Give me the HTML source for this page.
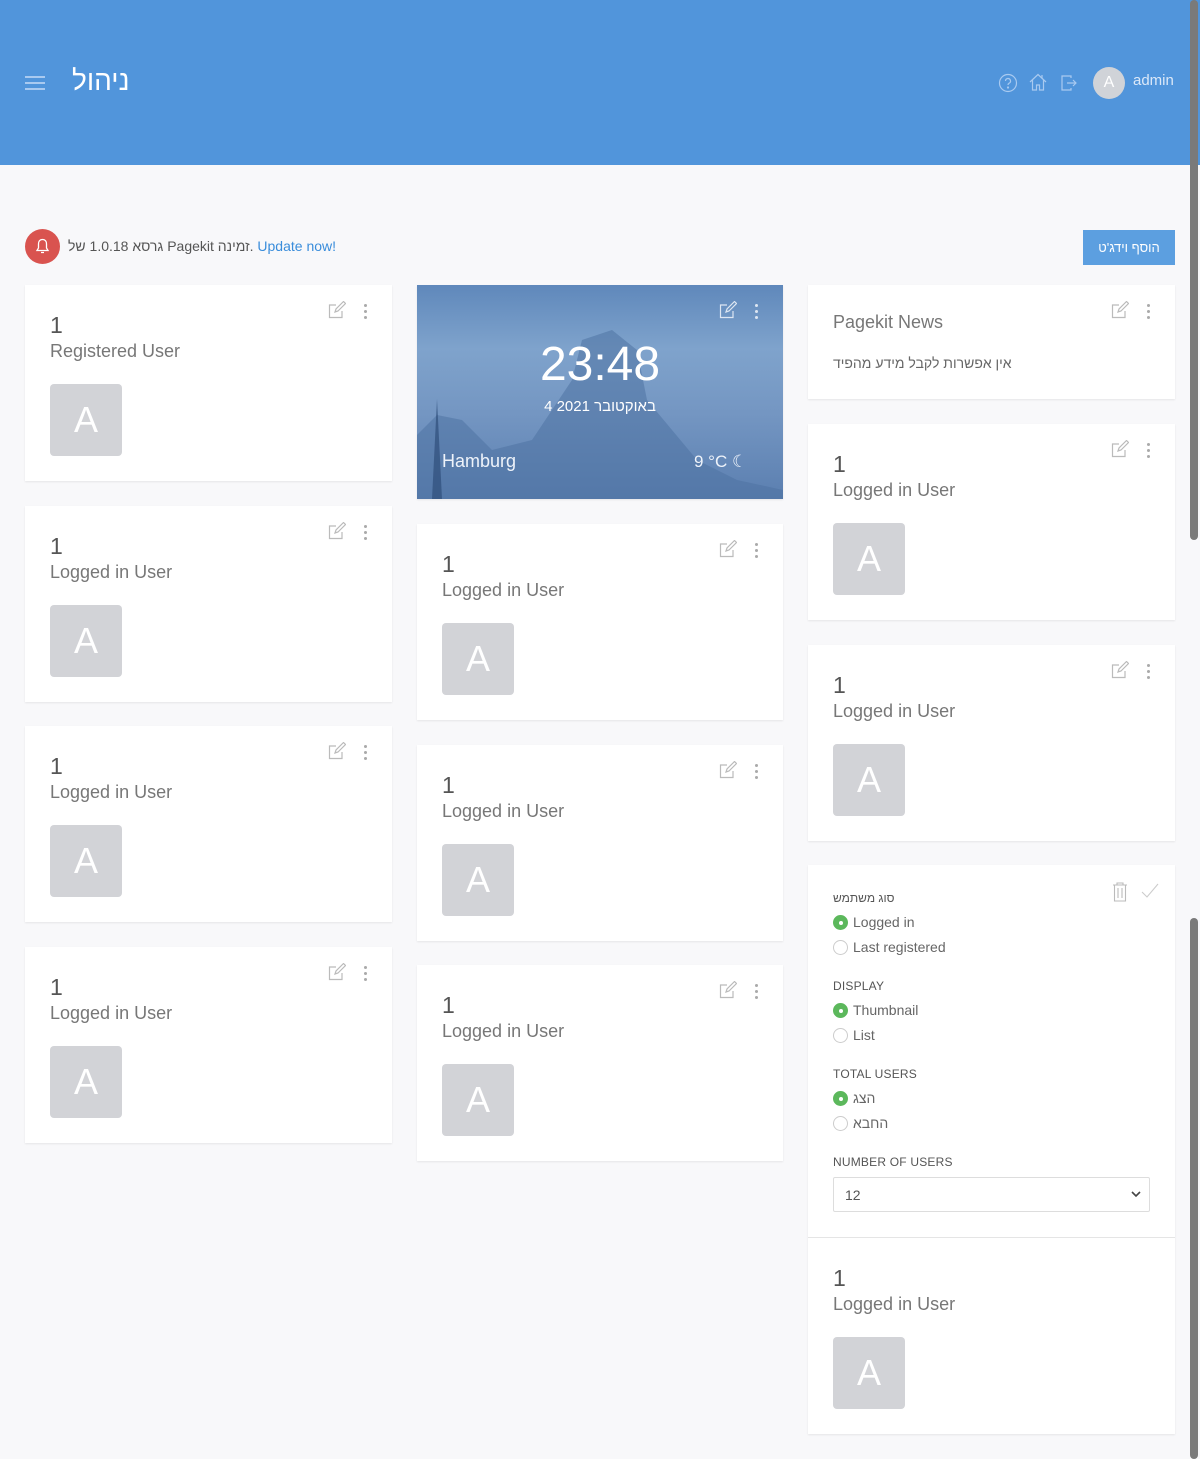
<!DOCTYPE html>
<html><head><meta charset="utf-8"><style>
*{box-sizing:border-box;margin:0;padding:0}
body{width:1200px;height:1459px;background:#f8f8fa;font-family:"Liberation Sans","Noto Sans CJK SC",sans-serif;position:relative;overflow:hidden;color:#666}
.hdr{position:absolute;left:0;top:0;width:1200px;height:165px;background:#5195db}
.card{position:absolute;background:#fff;box-shadow:0 1px 2px rgba(0,0,0,.08)}
.num{position:absolute;left:25px;top:27px;font-size:23px;color:#555;font-weight:300}
.lbl{position:absolute;left:25px;top:56px;font-size:18px;color:#777}
.av{position:absolute;left:25px;top:99px;width:72px;height:72px;background:#d2d3d7;border-radius:4px;color:#fff;font-size:36px;text-align:center;line-height:72px}
.ic{position:absolute;top:16px;right:46px}
.dots{position:absolute;top:19px;right:24px;width:4px}
.dots i{display:block;width:3px;height:3px;border-radius:50%;background:#aaa;margin-bottom:3px}
.ed{width:18px;height:18px}
.rad{position:absolute;left:25px;font-size:14px;color:#666;display:flex;align-items:center}
.rad b{display:inline-block;width:15px;height:15px;border-radius:50%;border:1px solid #ccc;margin-right:5px;background:#fff;position:relative}
.rad b.on{background:#5cb85c;border-color:#5cb85c}
.rad b.on:after{content:"";position:absolute;left:5px;top:5px;width:4px;height:4px;border-radius:50%;background:#fff}
.cap{position:absolute;left:25px;font-size:12px;color:#555;letter-spacing:.2px}
.w{display:inline-block}
</style></head><body>
<div class="hdr">
 <div style="position:absolute;left:25px;top:76px;width:20px">
  <div style="height:2px;background:#a9caf0;margin-bottom:4px"></div><div style="height:2px;background:#a9caf0;margin-bottom:4px"></div><div style="height:2px;background:#a9caf0"></div></div>
 <div style="position:absolute;left:72px;top:65px;color:#fff;font-size:28px;font-weight:300;font-family:'Liberation Sans','Noto Sans CJK JP',sans-serif">ניהול</div>
 <svg style="position:absolute;left:998px;top:73px" width="20" height="20" viewBox="0 0 20 20" fill="none" stroke="#a9caf0" stroke-width="1.2"><circle cx="10" cy="10" r="8.5"/><path d="M7.5 8a2.5 2.5 0 1 1 3.5 2.3c-.8.4-1 .9-1 1.7"/><circle cx="10" cy="14.5" r=".5"/></svg>
 <svg style="position:absolute;left:1028px;top:72px" width="20" height="20" viewBox="0 0 20 20" fill="none" stroke="#a9caf0" stroke-width="1.2"><path d="M2 10L10 2.5 18 10M4.5 8v10h4v-5h3v5h4V8M14 3v3"/></svg>
 <svg style="position:absolute;left:1060px;top:74px" width="18" height="18" viewBox="0 0 18 18" fill="none" stroke="#a9caf0" stroke-width="1.2"><path d="M11 4V2H2v14h9v-2M7 9h9M13 6l3 3-3 3"/></svg>
 <div style="position:absolute;left:1093px;top:67px;width:32px;height:32px;border-radius:50%;background:#d0d3d8;color:#fff;text-align:center;line-height:32px;font-size:16px">A</div>
 <div style="position:absolute;left:1133px;top:72px;color:#dbe8f8;font-size:15px">admin</div>
</div>
<div style="position:absolute;left:1190px;top:0;width:8px;height:540px;background:#7a7a7a;border-radius:4px"></div>
<div style="position:absolute;left:1190px;top:918px;width:8px;height:541px;background:#7a7a7a;border-radius:4px"></div>

<div style="position:absolute;left:25px;top:229px;width:35px;height:35px;border-radius:50%;background:#d9534f"></div>
<svg style="position:absolute;left:33px;top:237px" width="19" height="19" viewBox="0 0 19 19" fill="none" stroke="#fff" stroke-width="1.3"><path d="M9.5 2.5c-3 0-4 2.3-4 4.5v4L4 13.5h11L13.5 11V7c0-2.2-1-4.5-4-4.5zM8 15.5h3"/></svg>
<div dir="ltr" style="position:absolute;left:68px;top:238px;font-size:14px;color:#555;font-family:'Liberation Sans','Noto Sans CJK JP',sans-serif;white-space:nowrap"><span class="w">של</span> <span class="w">1.0.18</span> <span class="w">גרסא</span> <span class="w">Pagekit</span> <span class="w">זמינה.</span> <span style="color:#3a8ddb">Update now!</span></div>
<div style="position:absolute;left:1083px;top:230px;width:92px;height:35px;background:#5c9fe0;color:#fff;font-size:13px;text-align:center;line-height:35px;font-family:'Liberation Sans','Noto Sans CJK JP',sans-serif">הוסף וידג'ט</div>

<!-- col1 -->
<div class="card" style="left:25px;top:285px;width:367px;height:196px"><div class="num">1</div><div class="lbl">Registered User</div><div class="av">A</div><svg class="ic ed" viewBox="0 0 18 18" fill="none" stroke="#bbb" stroke-width="1.2"><path d="M14 10v6.5H1.5V4H8M7 11l1-3 7.5-7.5 2 2L10 10z"/></svg><div class="dots"><i></i><i></i><i></i></div></div>
<div class="card" style="left:25px;top:506px;width:367px;height:196px"><div class="num">1</div><div class="lbl">Logged in User</div><div class="av">A</div><svg class="ic ed" viewBox="0 0 18 18" fill="none" stroke="#bbb" stroke-width="1.2"><path d="M14 10v6.5H1.5V4H8M7 11l1-3 7.5-7.5 2 2L10 10z"/></svg><div class="dots"><i></i><i></i><i></i></div></div>
<div class="card" style="left:25px;top:726px;width:367px;height:196px"><div class="num">1</div><div class="lbl">Logged in User</div><div class="av">A</div><svg class="ic ed" viewBox="0 0 18 18" fill="none" stroke="#bbb" stroke-width="1.2"><path d="M14 10v6.5H1.5V4H8M7 11l1-3 7.5-7.5 2 2L10 10z"/></svg><div class="dots"><i></i><i></i><i></i></div></div>
<div class="card" style="left:25px;top:947px;width:367px;height:196px"><div class="num">1</div><div class="lbl">Logged in User</div><div class="av">A</div><svg class="ic ed" viewBox="0 0 18 18" fill="none" stroke="#bbb" stroke-width="1.2"><path d="M14 10v6.5H1.5V4H8M7 11l1-3 7.5-7.5 2 2L10 10z"/></svg><div class="dots"><i></i><i></i><i></i></div></div>

<!-- col2 -->
<div class="card" style="left:417px;top:285px;width:366px;height:214px;overflow:hidden;background:linear-gradient(180deg,#5f88bb 0%,#7fa3cc 30%,#7496c2 60%,#5b7fb0 100%)">
 <svg style="position:absolute;left:0;top:0" width="366" height="214"><path d="M0 214V150l20-20 25 5 30 30 40-10 40-60 10-40 30-10 25 20 10 50 50 60 40 20 46 10v9z" fill="#4f72a3" opacity=".55"/><path d="M15 214l5-100 5 100z" fill="#2f4f7a" opacity=".7"/></svg>
 <div style="position:absolute;left:0;width:366px;top:52px;text-align:center;color:#fff;font-size:48px;font-weight:300">23:48</div>
 <div style="position:absolute;left:0;width:366px;top:113px;text-align:center;color:#fff;font-size:15px;font-family:'Liberation Sans','Noto Sans CJK JP',sans-serif">4 2021 באוקטובר</div>
 <div style="position:absolute;left:25px;top:166px;color:#eef3fa;font-size:18px">Hamburg</div>
 <div style="position:absolute;left:277px;top:167px;color:#eef3fa;font-size:17px">9 °C ☾</div>
 <svg class="ic ed" viewBox="0 0 18 18" fill="none" stroke="#dde6f2" stroke-width="1.2"><path d="M14 10v6.5H1.5V4H8M7 11l1-3 7.5-7.5 2 2L10 10z"/></svg><div class="dots"><i style="background:#dde6f2"></i><i style="background:#dde6f2"></i><i style="background:#dde6f2"></i></div>
</div>
<div class="card" style="left:417px;top:524px;width:366px;height:196px"><div class="num">1</div><div class="lbl">Logged in User</div><div class="av">A</div><svg class="ic ed" viewBox="0 0 18 18" fill="none" stroke="#bbb" stroke-width="1.2"><path d="M14 10v6.5H1.5V4H8M7 11l1-3 7.5-7.5 2 2L10 10z"/></svg><div class="dots"><i></i><i></i><i></i></div></div>
<div class="card" style="left:417px;top:745px;width:366px;height:196px"><div class="num">1</div><div class="lbl">Logged in User</div><div class="av">A</div><svg class="ic ed" viewBox="0 0 18 18" fill="none" stroke="#bbb" stroke-width="1.2"><path d="M14 10v6.5H1.5V4H8M7 11l1-3 7.5-7.5 2 2L10 10z"/></svg><div class="dots"><i></i><i></i><i></i></div></div>
<div class="card" style="left:417px;top:965px;width:366px;height:196px"><div class="num">1</div><div class="lbl">Logged in User</div><div class="av">A</div><svg class="ic ed" viewBox="0 0 18 18" fill="none" stroke="#bbb" stroke-width="1.2"><path d="M14 10v6.5H1.5V4H8M7 11l1-3 7.5-7.5 2 2L10 10z"/></svg><div class="dots"><i></i><i></i><i></i></div></div>

<!-- col3 -->
<div class="card" style="left:808px;top:285px;width:367px;height:114px"><div style="position:absolute;left:25px;top:27px;font-size:18px;color:#777">Pagekit News</div><div style="position:absolute;left:25px;top:70px;font-size:14px;color:#666;font-family:'Liberation Sans','Noto Sans CJK JP',sans-serif">אין אפשרות לקבל מידע מהפיד</div><svg class="ic ed" viewBox="0 0 18 18" fill="none" stroke="#bbb" stroke-width="1.2"><path d="M14 10v6.5H1.5V4H8M7 11l1-3 7.5-7.5 2 2L10 10z"/></svg><div class="dots"><i></i><i></i><i></i></div></div>
<div class="card" style="left:808px;top:424px;width:367px;height:196px"><div class="num">1</div><div class="lbl">Logged in User</div><div class="av">A</div><svg class="ic ed" viewBox="0 0 18 18" fill="none" stroke="#bbb" stroke-width="1.2"><path d="M14 10v6.5H1.5V4H8M7 11l1-3 7.5-7.5 2 2L10 10z"/></svg><div class="dots"><i></i><i></i><i></i></div></div>
<div class="card" style="left:808px;top:645px;width:367px;height:196px"><div class="num">1</div><div class="lbl">Logged in User</div><div class="av">A</div><svg class="ic ed" viewBox="0 0 18 18" fill="none" stroke="#bbb" stroke-width="1.2"><path d="M14 10v6.5H1.5V4H8M7 11l1-3 7.5-7.5 2 2L10 10z"/></svg><div class="dots"><i></i><i></i><i></i></div></div>
<div class="card" style="left:808px;top:865px;width:367px;height:569px">
 <svg style="position:absolute;left:304px;top:17px" width="16" height="20" viewBox="0 0 16 20" fill="none" stroke="#bbb" stroke-width="1.1"><path d="M1 3h14M5 3V1h6v2M2.5 3v16h11V3M6 6v10M10 6v10"/></svg>
 <svg style="position:absolute;left:333px;top:18px" width="18" height="16" viewBox="0 0 18 16" fill="none" stroke="#ccc" stroke-width="1.1"><path d="M1 9l5 5L17 1"/></svg>
 <div style="position:absolute;left:25px;top:26px;font-size:12px;color:#555;font-family:'Liberation Sans','Noto Sans CJK JP',sans-serif">סוג משתמש</div>
 <div class="rad" style="top:49px"><b class="on"></b>Logged in</div>
 <div class="rad" style="top:74px"><b></b>Last registered</div>
 <div class="cap" style="top:114px">DISPLAY</div>
 <div class="rad" style="top:137px"><b class="on"></b>Thumbnail</div>
 <div class="rad" style="top:162px"><b></b>List</div>
 <div class="cap" style="top:202px">TOTAL USERS</div>
 <div class="rad" style="top:225px;font-family:'Liberation Sans','Noto Sans CJK JP',sans-serif"><b class="on"></b>הצג</div>
 <div class="rad" style="top:250px;font-family:'Liberation Sans','Noto Sans CJK JP',sans-serif"><b></b>החבא</div>
 <div class="cap" style="top:290px">NUMBER OF USERS</div>
 <div style="position:absolute;left:25px;top:312px;width:317px;height:35px;border:1px solid #ddd;border-radius:2px;font-size:14px;color:#555;padding:9px 11px">12<svg style="position:absolute;right:8px;top:13px" width="10" height="7" viewBox="0 0 10 7" fill="none" stroke="#444" stroke-width="1.6"><path d="M1 1l4 4 4-4"/></svg></div>
 <div style="position:absolute;left:0;top:372px;width:367px;height:1px;background:#e5e5e5"></div>
 <div style="position:absolute;left:0;top:373px;width:367px;height:196px"><div class="num">1</div><div class="lbl">Logged in User</div><div class="av">A</div></div>
</div>
</body></html>
